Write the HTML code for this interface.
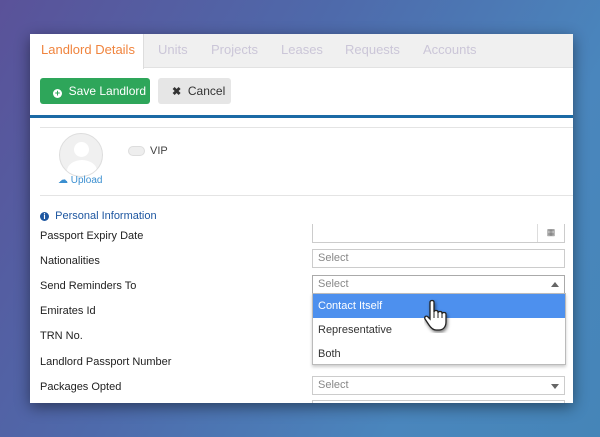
<!DOCTYPE html>
<html><head><style>
*{box-sizing:border-box;margin:0;padding:0}
body{width:600px;height:437px;overflow:hidden;position:relative;font-family:"Liberation Sans",sans-serif;
background:linear-gradient(120deg,#5a5299 0%,#4e6aab 40%,#4a86bd 75%,#4585b8 100%);}
.panel{position:absolute;left:30px;top:34px;width:543px;height:369px;background:#fff;box-shadow:0 4px 14px rgba(0,0,0,.45);overflow:hidden}
.tabs{position:absolute;left:0;top:0;width:543px;height:34px;background:#f0f0f0;border-bottom:1px solid #e2e2e2}
.tab{position:absolute;top:8px;font-size:13px;color:#cbc6d8}
.active{position:absolute;left:0;top:0;width:114px;height:35px;background:#fff;border-right:1px solid #ddd}
.btn{position:absolute;top:44px;height:26px;border-radius:3px;font-size:12px;line-height:26px}
.line{position:absolute;height:1px;background:#e4e4e4}
.lbl{position:absolute;left:10px;font-size:11px;color:#222}
.inp{position:absolute;left:282px;width:253px;height:19px;border:1px solid #ccc;font-size:11px;color:#888;padding-left:5px;line-height:17px;background:#fff}
.arr{position:absolute;right:5px;top:7px;width:0;height:0;border-left:4px solid transparent;border-right:4px solid transparent}
.dd{position:absolute;left:282px;top:259px;width:254px;height:72px;background:#fff;border:1px solid #bbb;box-shadow:0 2px 3px rgba(0,0,0,.2);font-size:11px;color:#333}
.dd div{height:24px;line-height:24px;padding-left:5px}
</style></head><body>
<div class="panel">
<div class="tabs">
<div class="active"></div>
<div class="tab" style="left:11px;color:#f0843e">Landlord Details</div>
<div class="tab" style="left:128px">Units</div>
<div class="tab" style="left:181px">Projects</div>
<div class="tab" style="left:251px">Leases</div>
<div class="tab" style="left:315px">Requests</div>
<div class="tab" style="left:393px">Accounts</div>
</div>
<div class="btn" style="left:10px;width:110px;background:#2ea65a;color:#fff;padding-left:13px"><span style="display:inline-block;width:9px;height:9px;border-radius:50%;background:#fff;color:#2ea65a;font-size:9px;line-height:9px;text-align:center;font-weight:bold;vertical-align:-1px">+</span>&nbsp; Save Landlord</div>
<div class="btn" style="left:128px;width:73px;background:#e6e6e6;color:#333;padding-left:14px"><b style="font-size:11px">✖</b>&nbsp; Cancel</div>
<div style="position:absolute;left:0;top:81px;width:543px;height:3px;background:#1b6aa5"></div>
<div class="line" style="left:10px;top:93px;width:533px"></div>
<div style="position:absolute;left:29px;top:99px;width:44px;height:44px;border-radius:50%;background:#f0f0f0;border:1px solid #ddd;overflow:hidden">
<div style="position:absolute;left:14px;top:8px;width:15px;height:15px;border-radius:50%;background:#fff"></div>
<div style="position:absolute;left:7px;top:26px;width:30px;height:22px;border-radius:50%;background:#fff"></div></div>
<div style="position:absolute;left:28px;top:141px;font-size:10px;color:#3b8fd0">☁ Upload</div>
<div style="position:absolute;left:98px;top:112px;width:17px;height:10px;border-radius:5px;background:#eee;border:1px solid #ddd"></div>
<div style="position:absolute;left:120px;top:111px;font-size:11px;color:#444">VIP</div>
<div class="line" style="left:10px;top:161px;width:533px"></div>
<div style="position:absolute;left:10px;top:176px;font-size:11px;color:#1d56a0"><span style="display:inline-block;width:9px;height:9px;border-radius:50%;background:#1d56a0;color:#fff;font-size:8px;line-height:9px;text-align:center;font-weight:bold">i</span>&nbsp; Personal Information</div>
<div class="lbl" style="top:196px">Passport Expiry Date</div>
<div class="lbl" style="top:221px">Nationalities</div>
<div class="lbl" style="top:246px">Send Reminders To</div>
<div class="lbl" style="top:271px">Emirates Id</div>
<div class="lbl" style="top:296px">TRN No.</div>
<div class="lbl" style="top:322px">Landlord Passport Number</div>
<div class="lbl" style="top:347px">Packages Opted</div>
<div class="inp" style="top:190px;height:19px;border-top:none"><div style="position:absolute;right:0;top:0;width:27px;height:18px;border-left:1px solid #ddd;text-align:center;font-size:9px;color:#666">▦</div></div>
<div class="inp" style="top:215px">Select</div>
<div class="inp" style="top:241px;border-color:#aaa">Select<div class="arr" style="top:6px;border-bottom:5px solid #666"></div></div>
<div class="dd"><div style="background:#4d90ee;color:#fff">Contact Itself</div><div>Representative</div><div>Both</div></div>
<div class="inp" style="top:342px">Select<div class="arr" style="border-top:5px solid #666"></div></div>
<div class="inp" style="top:366px"></div>
<svg style="position:absolute;left:394px;top:265px" width="28" height="34" viewBox="0 0 28 34"><path d="M6 3c0-2 4-2 4 0v10c0-2 4-2 4 0v1c0-2 4-2 4 0v1c0-2 4-2 4 0v8c0 5-3 8-7 8h-3c-3 0-5-2-7-5l-4-6c-1-2 1-4 3-2l2 2z" fill="#fff" stroke="#222" stroke-width="1.3" style="filter:drop-shadow(1px 2px 1.5px rgba(0,0,0,.5))"/><path d="M10 13v6M14 14v5M18 15v4" stroke="#222" stroke-width="1"/></svg>
</div>
</body></html>
